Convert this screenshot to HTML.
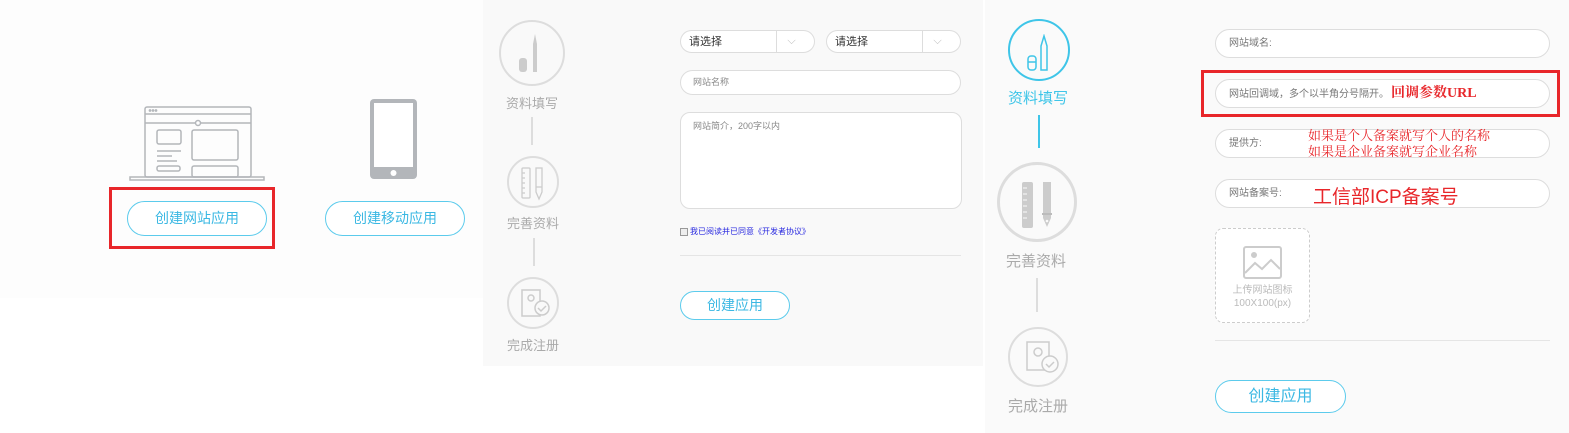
<!DOCTYPE html>
<html><head><meta charset="utf-8"><style>
*{margin:0;padding:0;box-sizing:border-box}
body{width:1569px;height:433px;background:#fff;position:relative;overflow:hidden;font-family:"Liberation Sans","Noto Sans CJK SC",sans-serif}
.a{position:absolute}
.btn{position:absolute;border:1px solid #5ccbec;border-radius:20px;color:#3bb8e3;text-align:center;background:#fff}
.inp{position:absolute;border:1px solid #ddd;border-radius:16px;background:#fff;font-size:10px;color:#777;padding-left:13px}
.circ{position:absolute;border:2px solid #ddd;border-radius:50%}
.st{position:absolute;font-size:13px;color:#aaa;width:80px;text-align:center}
.vl{position:absolute;width:2px;background:#ddd}
.red{color:#e8262a}
</style></head><body>
<div class="a" style="left:0;top:0;width:483px;height:298px;background:#fdfdfd"></div>
<div class="a" style="left:483px;top:0;width:500px;height:366px;background:#f9f9f9"></div>
<div class="a" style="left:985px;top:0;width:584px;height:433px;background:#fafafa"></div>

<!-- panel1 -->
<svg class="a" style="left:128px;top:104px" width="140" height="80" viewBox="0 0 140 80" fill="none" stroke="#b3b6ba" stroke-width="1.5">
<rect x="17" y="3" width="106" height="70" rx="2"/><line x1="17" y1="10" x2="123" y2="10"/><line x1="17" y1="19" x2="123" y2="19"/>
<circle cx="70" cy="19" r="2.5" fill="#fff"/><rect x="29" y="26" width="24" height="14" rx="2"/><rect x="64" y="26" width="46" height="30" rx="2"/>
<line x1="29" y1="47" x2="53" y2="47"/><line x1="29" y1="52" x2="44" y2="52"/><line x1="29" y1="57" x2="49" y2="57"/><rect x="29" y="62" width="23" height="5" rx="2"/>
<rect x="64" y="62" width="46" height="11" rx="2"/><path d="M2 73h134v3H2z"/>
<circle cx="22" cy="6.5" r=".6"/><circle cx="25" cy="6.5" r=".6"/><circle cx="28" cy="6.5" r=".6"/></svg>
<svg class="a" style="left:369px;top:99px" width="48" height="81"><rect x="1" y="0" width="47" height="80" rx="4" fill="#b3b6ba"/><rect x="5" y="4" width="39" height="64" fill="#fff"/><circle cx="24.5" cy="74" r="3" fill="#fff"/></svg>
<div class="a" style="left:109px;top:187px;width:166px;height:62px;border:3px solid #e8262a"></div>
<div class="btn" style="left:127px;top:201px;width:140px;height:35px;line-height:33px;font-size:14px">创建网站应用</div>
<div class="btn" style="left:325px;top:201px;width:140px;height:35px;line-height:33px;font-size:14px">创建移动应用</div>

<!-- panel2 -->
<div class="circ" style="left:499px;top:20px;width:66px;height:66px"></div>
<svg class="a" style="left:515px;top:30px" width="30" height="46"><path d="M20 4 L22 14 V42 H18 V14Z" fill="#ccc"/><rect x="4" y="28" width="8" height="14" rx="3" fill="#ccc"/></svg>
<div class="st" style="left:492px;top:93px">资料填写</div>
<div class="vl" style="left:531px;top:117px;height:28px"></div>
<div class="circ" style="left:507px;top:156px;width:52px;height:52px"></div>
<svg class="a" style="left:519px;top:166px" width="28" height="36" fill="none" stroke="#ccc" stroke-width="1.3"><rect x="3" y="2" width="8" height="30" rx="1"/><path d="M3 7h3M3 12h3M3 17h3M3 22h3M3 27h3"/><path d="M17 2h6v24l-3 7-3-7z"/><path d="M17 21h6"/></svg>
<div class="st" style="left:493px;top:213px">完善资料</div>
<div class="vl" style="left:533px;top:238px;height:28px"></div>
<div class="circ" style="left:507px;top:277px;width:52px;height:52px"></div>
<svg class="a" style="left:520px;top:288px" width="30" height="30" fill="none" stroke="#ccc" stroke-width="1.5"><rect x="2" y="2" width="18" height="26"/><circle cx="11" cy="10" r="3"/><circle cx="22" cy="20" r="7" fill="#f9f9f9"/><path d="M18 20l3 3 5-5"/></svg>
<div class="st" style="left:493px;top:335px">完成注册</div>
<div class="inp" style="left:680px;top:30px;width:135px;height:23px;line-height:23px;font-size:11px;color:#333;padding-left:8px">请选择<span class="a" style="left:95px;top:0;height:21px;line-height:21px;border-left:1px solid #ddd;width:30px;text-align:center;color:#bbb">⌵</span></div>
<div class="inp" style="left:826px;top:30px;width:135px;height:23px;line-height:23px;font-size:11px;color:#333;padding-left:8px">请选择<span class="a" style="left:95px;top:0;height:21px;line-height:21px;border-left:1px solid #ddd;width:30px;text-align:center;color:#bbb">⌵</span></div>
<div class="inp" style="left:680px;top:70px;width:281px;height:25px;line-height:23px;font-size:9px;color:#888;padding-left:12px">网站名称</div>
<div class="inp" style="left:680px;top:112px;width:282px;height:97px;border-radius:10px;font-size:9px;color:#888;padding:6px 12px">网站简介，200字以内</div>
<div class="a" style="left:680px;top:228px;width:8px;height:8px;border:1px solid #999;background:#eee"></div>
<div class="a" style="left:690px;top:226px;font-size:8px;color:#2a2ae0">我已阅读并已同意《开发者协议》</div>
<div class="a" style="left:680px;top:255px;width:281px;height:1px;background:#e5e5e5"></div>
<div class="btn" style="left:680px;top:291px;width:110px;height:29px;line-height:27px;font-size:14px">创建应用</div>

<!-- panel3 -->
<div class="circ" style="left:1008px;top:19px;width:62px;height:62px;border-color:#3ec5e8"></div>
<svg class="a" style="left:1024px;top:34px" width="30" height="40" fill="none" stroke="#3ec5e8" stroke-width="1.5"><path d="M20 2L23 12V36H17V12Z"/><rect x="4" y="22" width="8" height="14" rx="3"/><line x1="4" y1="28" x2="12" y2="28"/></svg>
<div class="st" style="left:998px;top:87px;font-size:15px;color:#3ec5e8">资料填写</div>
<div class="vl" style="left:1038px;top:115px;height:33px;background:#3ec5e8"></div>
<div class="circ" style="left:997px;top:162px;width:80px;height:80px;border-width:3px"></div>
<svg class="a" style="left:1020px;top:180px" width="40" height="50"><rect x="2" y="2" width="11" height="46" rx="2" fill="#ccc"/><path d="M3 8h4M3 14h4M3 20h4M3 26h4M3 32h4M3 38h4" stroke="#fafafa" stroke-width="1"/><path d="M23 2h8v36l-4 9-4-9z" fill="#ccc"/><path d="M22 34h10" stroke="#bbb" stroke-width="2"/><circle cx="27" cy="41" r="1.3" fill="#fafafa"/></svg>
<div class="st" style="left:996px;top:250px;font-size:15px">完善资料</div>
<div class="vl" style="left:1036px;top:278px;height:34px"></div>
<div class="circ" style="left:1008px;top:327px;width:60px;height:60px"></div>
<svg class="a" style="left:1024px;top:340px" width="36" height="36" fill="none" stroke="#ccc" stroke-width="1.5"><rect x="3" y="2" width="22" height="28"/><circle cx="14" cy="12" r="4"/><circle cx="26" cy="24" r="8" fill="#fafafa"/><path d="M22 24l3 3 5-5"/></svg>
<div class="st" style="left:998px;top:395px;font-size:15px">完成注册</div>
<div class="inp" style="left:1215px;top:29px;width:335px;height:29px;line-height:27px">网站域名:</div>
<div class="a" style="left:1201px;top:70px;width:359px;height:47px;border:3px solid #e8262a"></div>
<div class="inp" style="left:1215px;top:79px;width:335px;height:29px;line-height:27px">网站回调域，多个以半角分号隔开。<span class="red" style="font-family:'Liberation Serif','Noto Serif CJK SC',serif;font-size:14px;font-weight:bold;margin-left:2px">回调参数URL</span></div>
<div class="inp" style="left:1215px;top:129px;width:335px;height:29px;line-height:27px">提供方:</div>
<div class="a red" style="left:1308px;top:128px;font-family:'Liberation Serif','Noto Serif CJK SC',serif;font-size:13px;line-height:16px">如果是个人备案就写个人的名称<br>如果是企业备案就写企业名称</div>
<div class="inp" style="left:1215px;top:179px;width:335px;height:29px;line-height:27px">网站备案号:</div>
<div class="a red" style="left:1313px;top:182px;font-size:19px">工信部ICP备案号</div>
<div class="a" style="left:1215px;top:228px;width:95px;height:95px;border:1px dashed #ccc;border-radius:8px;background:#fff"></div>
<svg class="a" style="left:1243px;top:246px" width="39" height="33" fill="none" stroke="#ccc" stroke-width="2"><rect x="1" y="1" width="37" height="31" rx="2"/><circle cx="11" cy="9" r="2" fill="#ccc"/><path d="M2 27l10-10 7 6 9-9 9 9"/></svg>
<div class="a" style="left:1215px;top:284px;width:95px;text-align:center;font-size:10px;color:#bbb;line-height:13px">上传网站图标<br>100X100(px)</div>
<div class="a" style="left:1215px;top:340px;width:335px;height:1px;background:#e5e5e5"></div>
<div class="btn" style="left:1215px;top:380px;width:131px;height:33px;line-height:31px;font-size:16px">创建应用</div>
</body></html>
